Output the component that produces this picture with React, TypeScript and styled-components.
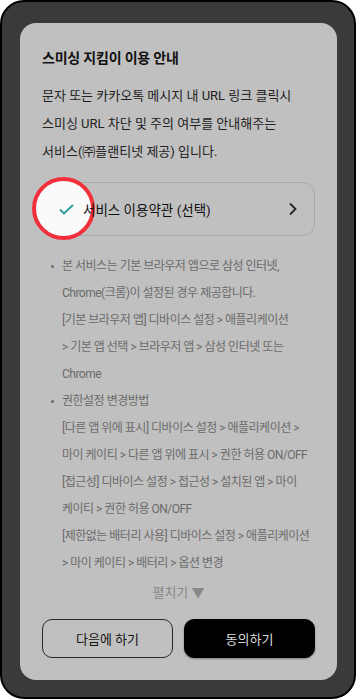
import React from 'react';
import styled, { createGlobalStyle } from 'styled-components';

const GlobalStyle = createGlobalStyle`
    html, body {
        margin: 0;
        padding: 0;
        background: #ffffff;
    }
    body {
        font-family: Roboto, "Noto Sans CJK KR", sans-serif;
    }
`;

const Frame = styled.div`
    box-sizing: border-box;
    width: 356px;
    height: 699px;
    padding: 21px 17px 17px 18px;
    background: #3a3a3a;
    border: 2px solid #000;
    border-radius: 24px;
    display: flex;
`;

const Card = styled.div`
    flex: 1;
    min-width: 0;
    display: flex;
    flex-direction: column;
    background: #c0c0c0;
    border-radius: 16px;
    padding: 24px 22px 22px;
`;

const Title = styled.h1`
    margin: 0;
    font-size: 14px;
    line-height: 22px;
    font-weight: 700;
    color: #111;
    letter-spacing: -0.2px;
`;

const Intro = styled.p`
    margin: 13px 0 0;
    font-size: 13px;
    line-height: 28px;
    color: #222;
`;

const TermsRow = styled.div`
    position: relative;
    margin-top: 16px;
    height: 54px;
    box-sizing: border-box;
    border: 1px solid #a8a8a8;
    border-radius: 12px;
    display: flex;
    align-items: center;
    padding: 0 16px;
`;

const Highlight = styled.span`
    position: absolute;
    left: -11px;
    top: -6px;
    width: 63px;
    height: 63px;
    box-sizing: border-box;
    border: 4px solid #f2303c;
    border-radius: 50%;
    background: #fafafa;
    z-index: 0;
`;

const RowLabel = styled.span`
    position: relative;
    z-index: 1;
    flex: 1;
    display: flex;
    align-items: center;
    gap: 9px;
    font-size: 13.5px;
    color: #111;
`;

const Chevron = styled.svg`
    position: relative;
    z-index: 1;
    width: 10px;
    height: 14px;
`;

const Notes = styled.ul`
    list-style: none;
    margin: 17px 0 0;
    padding: 0 0 0 20px;
    font-size: 12px;
    line-height: 27px;
    color: #6b6b6b;
    letter-spacing: -0.5px;
`;

const Note = styled.li<{ $bullet?: boolean }>`
    position: relative;
    &::before {
        content: '';
        display: ${(p) => (p.$bullet ? 'block' : 'none')};
        position: absolute;
        left: -11px;
        top: 12px;
        width: 3px;
        height: 3px;
        border-radius: 50%;
        background: #6b6b6b;
    }
`;

const Line = styled.span`
    display: block;
    white-space: nowrap;
`;

const More = styled.div`
    margin-top: 6px;
    text-align: center;
    font-size: 13px;
    line-height: 20px;
    color: #888;
`;

const Actions = styled.div`
    margin-top: 16px;
    display: grid;
    grid-template-columns: 1fr 1fr;
    gap: 11px;
`;

const Button = styled.button<{ $primary?: boolean }>`
    height: 39px;
    border-radius: 10px;
    font-family: inherit;
    font-size: 13px;
    border: 1px solid ${(p) => (p.$primary ? '#000' : '#2a2a2a')};
    background: ${(p) => (p.$primary ? '#000' : 'transparent')};
    color: ${(p) => (p.$primary ? '#dcdcdc' : '#111')};
    box-shadow: ${(p) => (p.$primary ? '0 1px 2px rgba(0,0,0,0.35)' : 'none')};
`;

export default function App() {
    return (
        <>
            <GlobalStyle />
            <Frame>
                <Card>
                    <Title>스미싱 지킴이 이용 안내</Title>
                    <Intro>
                        문자 또는 카카오톡 메시지 내 URL 링크 클릭시
                        <br />
                        스미싱 URL 차단 및 주의 여부를 안내해주는
                        <br />
                        서비스(㈜플랜티넷 제공) 입니다.
                    </Intro>
                    <TermsRow>
                        <Highlight />
                        <RowLabel>
                            <svg width="15" height="11" viewBox="0 0 15 11">
                                <polyline
                                    points="1,5.5 5,9.5 14,1"
                                    fill="none"
                                    stroke="#2a9a96"
                                    strokeWidth="1.8"
                                />
                            </svg>
                            서비스 이용약관 (선택)
                        </RowLabel>
                        <Chevron viewBox="0 0 10 14">
                            <polyline
                                points="2,1.5 7.5,7 2,12.5"
                                fill="none"
                                stroke="#222"
                                strokeWidth="1.8"
                            />
                        </Chevron>
                    </TermsRow>
                    <Notes>
                        <Note $bullet>
                            <Line>본 서비스는 기본 브라우저 앱으로 삼성 인터넷,</Line>
                            <Line>Chrome(크롬)이 설정된 경우 제공합니다.</Line>
                            <Line>[기본 브라우저 앱] 디바이스 설정 &gt; 애플리케이션</Line>
                            <Line>&gt; 기본 앱 선택 &gt; 브라우저 앱 &gt; 삼성 인터넷 또는</Line>
                            <Line>Chrome</Line>
                        </Note>
                        <Note $bullet>
                            <Line>권한설정 변경방법</Line>
                            <Line>[다른 앱 위에 표시] 디바이스 설정 &gt; 애플리케이션 &gt;</Line>
                            <Line>마이 케이티 &gt; 다른 앱 위에 표시 &gt; 권한 허용 ON/OFF</Line>
                            <Line>[접근성] 디바이스 설정 &gt; 접근성 &gt; 설치된 앱 &gt; 마이</Line>
                            <Line>케이티 &gt; 권한 허용 ON/OFF</Line>
                            <Line>[제한없는 배터리 사용] 디바이스 설정 &gt; 애플리케이션</Line>
                            <Line>&gt; 마이 케이티 &gt; 배터리 &gt; 옵션 변경</Line>
                        </Note>
                    </Notes>
                    <More>펼치기 ▼</More>
                    <Actions>
                        <Button>다음에 하기</Button>
                        <Button $primary>동의하기</Button>
                    </Actions>
                </Card>
            </Frame>
        </>
    );
}
